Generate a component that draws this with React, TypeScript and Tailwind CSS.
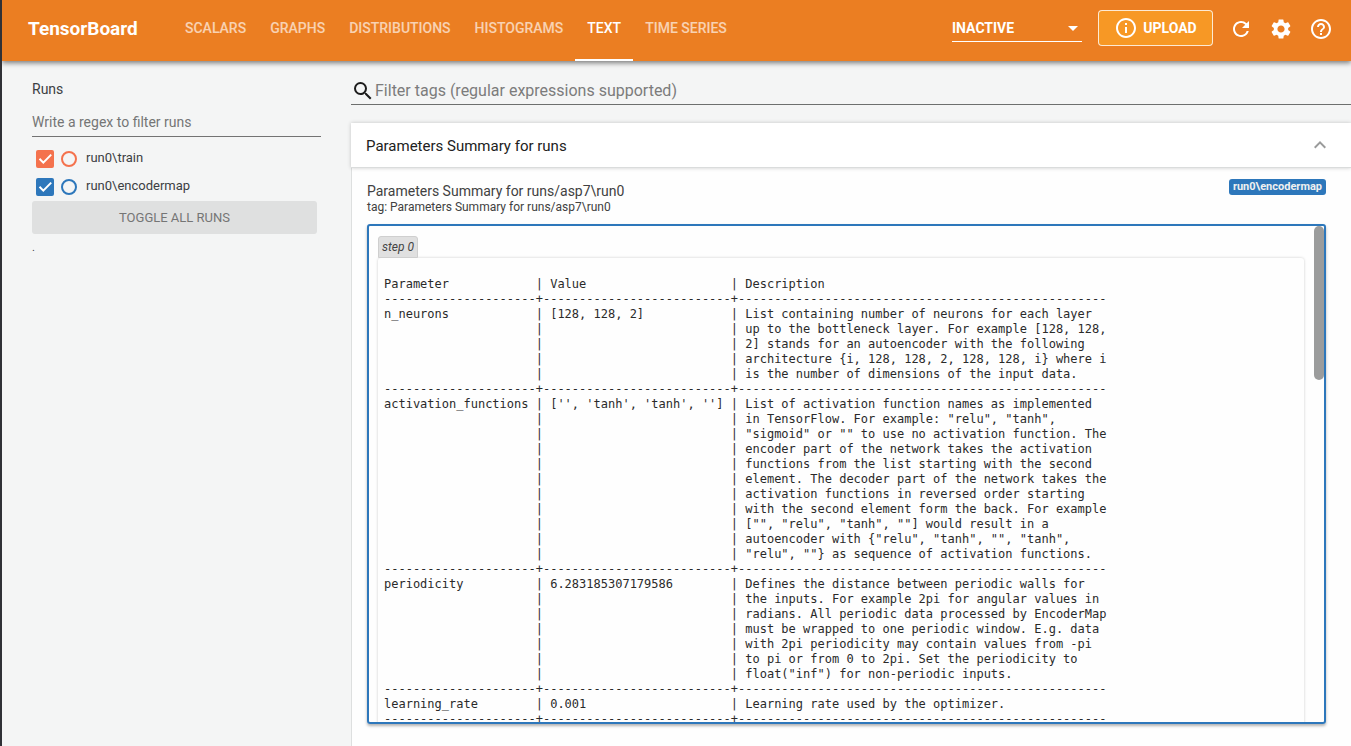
import { useState } from "react";
import {
  MdArrowDropDown,
  MdExpandLess,
  MdHelpOutline,
  MdInfoOutline,
  MdRefresh,
  MdSearch,
  MdSettings,
} from "react-icons/md";

const tabs = ["SCALARS", "GRAPHS", "DISTRIBUTIONS", "HISTOGRAMS", "TEXT", "TIME SERIES"];

const runs = [
  {
    name: "run0\\train",
    box: "border-[#f4724d] checked:bg-[#f4724d]",
    ring: "border-[#f4724d]",
  },
  {
    name: "run0\\encodermap",
    box: "border-[#2d77bb] checked:bg-[#2d77bb]",
    ring: "border-[#2d77bb]",
  },
];

type Parameter = { name: string; value: string; description: string[] };

const parameters: Parameter[] = [
  {
    name: "n_neurons",
    value: "[128, 128, 2]",
    description: [
      "List containing number of neurons for each layer",
      "up to the bottleneck layer. For example [128, 128,",
      "2] stands for an autoencoder with the following",
      "architecture {i, 128, 128, 2, 128, 128, i} where i",
      "is the number of dimensions of the input data.",
    ],
  },
  {
    name: "activation_functions",
    value: "['', 'tanh', 'tanh', '']",
    description: [
      "List of activation function names as implemented",
      'in TensorFlow. For example: "relu", "tanh",',
      '"sigmoid" or "" to use no activation function. The',
      "encoder part of the network takes the activation",
      "functions from the list starting with the second",
      "element. The decoder part of the network takes the",
      "activation functions in reversed order starting",
      "with the second element form the back. For example",
      '["", "relu", "tanh", ""] would result in a',
      'autoencoder with {"relu", "tanh", "", "tanh",',
      '"relu", ""} as sequence of activation functions.',
    ],
  },
  {
    name: "periodicity",
    value: "6.283185307179586",
    description: [
      "Defines the distance between periodic walls for",
      "the inputs. For example 2pi for angular values in",
      "radians. All periodic data processed by EncoderMap",
      "must be wrapped to one periodic window. E.g. data",
      "with 2pi periodicity may contain values from -pi",
      "to pi or from 0 to 2pi. Set the periodicity to",
      'float("inf") for non-periodic inputs.',
    ],
  },
  {
    name: "learning_rate",
    value: "0.001",
    description: ["Learning rate used by the optimizer."],
  },
];

const rule = `${"-".repeat(21)}+${"-".repeat(26)}+${"-".repeat(51)}`;

const line = (name: string, value: string, text: string) =>
  `${name.padEnd(21)}| ${value.padEnd(25)}| ${text}`;

const summary = [
  line("Parameter", "Value", "Description"),
  rule,
  ...parameters.flatMap((p) => [
    ...p.description.map((text, i) => line(i ? "" : p.name, i ? "" : p.value, text)),
    rule,
  ]),
].join("\n");

function Header() {
  const [active, setActive] = useState("TEXT");
  return (
    <header className="relative z-10 flex h-[61px] shrink-0 items-center bg-[#eb7e22] pr-[18px] pl-[26px] text-white shadow-[0_2px_5px_rgba(0,0,0,0.5)]">
      <h1 className="w-[109px] pb-0.5 text-[19px] font-bold whitespace-nowrap">TensorBoard</h1>
      <nav className="ml-9 flex h-full">
        {tabs.map((tab) => (
          <button
            key={tab}
            type="button"
            onClick={() => setActive(tab)}
            className={
              tab === active
                ? "border-b-2 border-white px-3 pt-px pb-1 text-sm font-medium whitespace-nowrap"
                : "border-b-2 border-transparent px-3 pt-px pb-1 text-sm font-medium whitespace-nowrap text-white/65"
            }
          >
            {tab}
          </button>
        ))}
      </nav>
      <div className="ml-auto flex items-center pb-1">
        <div className="relative mr-4 w-[130px]">
          <select
            aria-label="Plugin"
            className="h-[27px] w-full appearance-none border-b border-white bg-transparent text-sm font-bold outline-none"
          >
            <option>INACTIVE</option>
          </select>
          <MdArrowDropDown className="pointer-events-none absolute top-px right-[-3px] size-6" />
        </div>
        <button
          type="button"
          className="mr-2 mb-0.5 flex h-9 w-[115px] items-center justify-center gap-[5px] rounded border border-white/80 bg-[#f79825] text-sm font-bold"
        >
          <MdInfoOutline className="size-6" />
          UPLOAD
        </button>
        <button
          type="button"
          aria-label="Reload"
          className="flex h-10 w-10 items-center justify-center"
        >
          <MdRefresh className="size-6" />
        </button>
        <button
          type="button"
          aria-label="Settings"
          className="flex h-10 w-10 items-center justify-center"
        >
          <MdSettings className="size-6" />
        </button>
        <a href="#help" aria-label="Help" className="ml-2 flex h-10 items-center">
          <MdHelpOutline className="size-6" />
        </a>
      </div>
    </header>
  );
}

function Sidebar() {
  return (
    <aside className="w-[349px] shrink-0 px-[30px] pt-[18px] text-[#3c4043]">
      <h2 className="text-sm leading-5">Runs</h2>
      <input
        type="text"
        aria-label="Write a regex to filter runs"
        placeholder="Write a regex to filter runs"
        className="mt-2 h-[30px] w-full border-b border-[#737373] bg-transparent text-sm outline-none placeholder:text-[#757575]"
      />
      <ul className="mt-2 text-[13px]">
        {runs.map((run) => (
          <li key={run.name} className="flex h-7 items-center pl-1">
            <label className="flex items-center">
              <span className="relative mr-[7px] flex">
                <input
                  type="checkbox"
                  defaultChecked
                  className={`peer size-[18px] appearance-none rounded-[2px] border-2 ${run.box}`}
                />
                <svg
                  viewBox="0 0 18 18"
                  className="pointer-events-none absolute inset-0 hidden size-[18px] fill-none stroke-white stroke-2 peer-checked:block"
                >
                  <path d="M3.5 8.8 L7.3 12.6 L15.2 4.6" />
                </svg>
              </span>
              <span className={`mr-[9px] size-4 rounded-full border-2 ${run.ring}`} />
              <span className="pb-0.5">{run.name}</span>
            </label>
          </li>
        ))}
      </ul>
      <button
        type="button"
        className="h-[33px] w-[285px] rounded-[3px] bg-[#dfe0e0] text-[13px] text-[#757575]"
      >
        TOGGLE ALL RUNS
      </button>
      <p className="mt-1 text-[11px] leading-5">.</p>
    </aside>
  );
}

function TextCard() {
  return (
    <article className="flex grow flex-col border-l border-[#dddfdf] bg-[#fefefe] pt-[11px] pr-[25px] pl-[15px]">
      <div className="flex items-start justify-between text-[#414141]">
        <div>
          <h3 className="text-sm leading-6">Parameters Summary for runs/asp7\run0</h3>
          <p className="text-xs leading-2">tag: Parameters Summary for runs/asp7\run0</p>
        </div>
        <span className="rounded-[3px] bg-[#2d77bb] px-1 text-[11px] leading-4 font-bold text-[#f0f0f0]">
          run0\encodermap
        </span>
      </div>
      <div className="relative mt-[13px] h-[500px] rounded-[3px] border-2 border-[#2d77bb] shadow-[0_2px_3px_rgba(0,0,0,0.3)]">
        <div className="h-full overflow-y-auto pt-[10px] pr-5 pl-[9px] [scrollbar-width:none]">
          <div className="flex">
            <span className="h-[22px] rounded-t-[3px] border border-[#cfcfcf] bg-[#e0e0e0] px-[3px] text-xs leading-5 text-[#444444] italic">
              step 0
            </span>
          </div>
          <pre className="rounded-[3px] pt-[19px] pl-[6px] font-['DejaVu_Sans_Mono','Liberation_Mono',monospace] text-[12px] leading-[15px] text-[#2a2a2a] shadow-[0_0_3px_rgba(0,0,0,0.2)]">
            {summary}
          </pre>
        </div>
        <div className="absolute top-0 right-0 h-[154px] w-[10px] rounded-full bg-[#9b9c9c]" />
      </div>
    </article>
  );
}

export default function App() {
  return (
    <div className="flex h-screen flex-col overflow-hidden border-l-2 border-[#303136] bg-[#f4f5f5] font-[Roboto,sans-serif]">
      <Header />
      <div className="flex grow">
        <Sidebar />
        <main className="flex min-w-0 grow flex-col">
          <label className="mt-4 flex h-7 shrink-0 items-center border-b border-[#6d6f6e]">
            <MdSearch className="size-6 shrink-0 text-[#1c1c1c]" />
            <input
              type="text"
              aria-label="Filter tags"
              placeholder="Filter tags (regular expressions supported)"
              className="min-w-0 grow bg-transparent text-base outline-none placeholder:text-[#7c7c7c]"
            />
          </label>
          <button
            type="button"
            className="relative mt-[18px] flex h-[45px] shrink-0 items-center justify-between border-b border-[#dadcdc] bg-white pr-[19px] pl-[15px] text-left text-[15px] text-[#212121] shadow-[0_0_4px_rgba(0,0,0,0.2)]"
          >
            <span className="pt-0.5">Parameters Summary for runs</span>
            <MdExpandLess className="size-6 text-[#9a9b9b]" />
          </button>
          <TextCard />
        </main>
      </div>
    </div>
  );
}
